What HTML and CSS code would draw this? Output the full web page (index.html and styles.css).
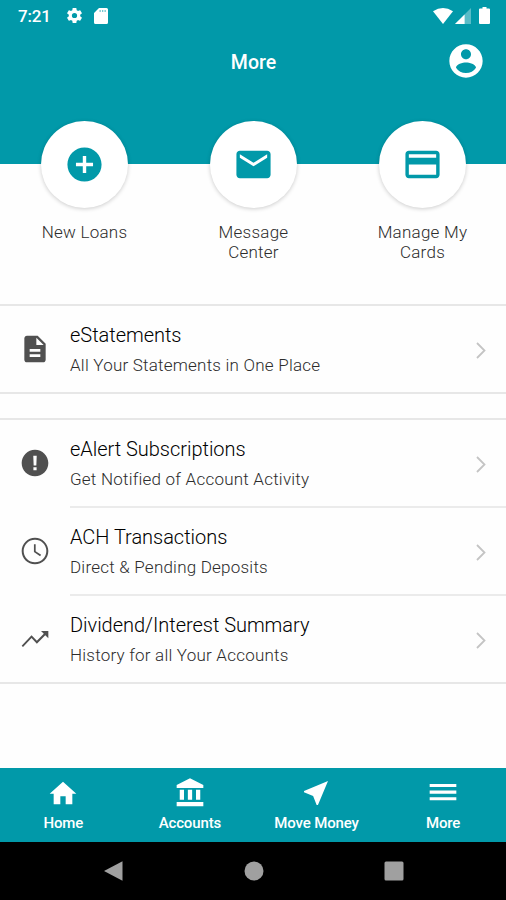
FILE: index.html
```html
<!DOCTYPE html>
<html lang="en">
<head>
<meta charset="utf-8">
<meta name="viewport" content="width=device-width, initial-scale=1">
<title>More</title>
<link rel="stylesheet" href="styles.css">
</head>
<body>
<div class="screen">
  <header class="header">
    <div class="status">
      <span class="time">7:21</span>
      <svg class="gear" viewBox="0 0 24 24"><path d="M19.14 12.94c.04-.3.06-.61.06-.94s-.02-.64-.07-.94l2.03-1.58a.49.49 0 0 0 .12-.61l-1.92-3.32a.49.49 0 0 0-.59-.22l-2.39.96c-.5-.38-1.03-.7-1.62-.94l-.36-2.54a.48.48 0 0 0-.48-.41h-3.84c-.24 0-.43.17-.47.41l-.36 2.54c-.59.24-1.13.57-1.62.94l-2.39-.96a.48.48 0 0 0-.59.22L2.74 8.87c-.12.21-.08.47.12.61l2.03 1.58c-.05.3-.09.63-.09.94s.02.64.07.94l-2.03 1.58a.49.49 0 0 0-.12.61l1.92 3.32c.12.22.37.29.59.22l2.39-.96c.5.38 1.03.7 1.62.94l.36 2.54c.05.24.24.41.48.41h3.84c.24 0 .44-.17.47-.41l.36-2.54c.59-.24 1.13-.56 1.62-.94l2.39.96c.22.08.47 0 .59-.22l1.92-3.32a.48.48 0 0 0-.12-.61l-2.01-1.58zM12 15.3a3.3 3.3 0 1 1 0-6.6 3.3 3.3 0 0 1 0 6.6z"/></svg>
      <svg class="sd" viewBox="0 0 14 16"><path d="M5 0h7.500a1.500 1.500 0 0 1 1.500 1.500v13a1.500 1.500 0 0 1-1.500 1.500h-11A1.500 1.500 0 0 1 0 14.500V5z"/><path class="slots" d="M5.500 2h1.300v2H5.500zM8 2h1.300v2H8zM10.500 2h1.300v2h-1.300z"/></svg>
      <span class="spacer"></span>
      <svg class="wifi" viewBox="0 0 20 16"><path d="M0 3.200Q10-3.200 20 3.200L10 16z"/></svg>
      <svg class="signal" viewBox="0 0 16 16"><path class="dim" d="M16 0v16H0z"/><path d="M9.600 6.400V16H0z"/></svg>
      <svg class="battery" viewBox="0 0 11 17"><path d="M3.500 0h4v1.600H10a1 1 0 0 1 1 1V16a1 1 0 0 1-1 1H1a1 1 0 0 1-1-1V2.600a1 1 0 0 1 1-1h2.500z"/></svg>
    </div>
    <div class="titlebar">
      <h1>More</h1>
      <svg class="profile" viewBox="0 0 24 24"><path d="M12 2C6.480 2 2 6.480 2 12s4.480 10 10 10 10-4.480 10-10S17.520 2 12 2zm0 3c1.660 0 3 1.340 3 3s-1.340 3-3 3-3-1.340-3-3 1.340-3 3-3zm0 14.200c-2.500 0-4.710-1.280-6-3.220.03-1.990 4-3.080 6-3.080 1.990 0 5.970 1.090 6 3.080-1.290 1.940-3.500 3.220-6 3.220z"/></svg>
    </div>
  </header>

  <section class="actions">
    <div class="action">
      <div class="circle"><svg viewBox="0 0 24 24"><path d="M12 2C6.480 2 2 6.480 2 12s4.480 10 10 10 10-4.480 10-10S17.520 2 12 2zm5 11h-4v4h-2v-4H7v-2h4V7h2v4h4v2z"/></svg></div>
      <p>New Loans</p>
    </div>
    <div class="action">
      <div class="circle"><svg viewBox="0 0 24 24"><path d="M20 4H4c-1.100 0-1.990.9-1.990 2L2 18c0 1.100.9 2 2 2h16c1.100 0 2-.9 2-2V6c0-1.100-.9-2-2-2zm0 4l-8 5-8-5V6l8 5 8-5v2z"/></svg></div>
      <p>Message<br>Center</p>
    </div>
    <div class="action">
      <div class="circle"><svg viewBox="0 0 24 24"><path d="M20 4H4c-1.110 0-1.990.89-1.990 2L2 18c0 1.110.89 2 2 2h16c1.110 0 2-.89 2-2V6c0-1.110-.89-2-2-2zm0 14H4v-6h16v6zm0-10H4V6h16v2z"/></svg></div>
      <p>Manage My<br>Cards</p>
    </div>
  </section>

  <main>
    <div class="group">
      <div class="row">
        <svg class="icon" viewBox="0 0 24 24"><path d="M14 2H6c-1.100 0-1.990.9-1.990 2L4 20c0 1.100.89 2 1.990 2H18c1.100 0 2-.9 2-2V8l-6-6zm2 16H8v-2h8v2zm0-4H8v-2h8v2zm-3-5V3.500L18.500 9H13z"/></svg>
        <div class="body"><div class="text"><h2>eStatements</h2><p>All Your Statements in One Place</p></div>
        <svg class="chevron" viewBox="0 0 10 17"><path d="M1 1l7.500 7.500L1 16"/></svg></div>
      </div>
    </div>
    <div class="group">
      <div class="row">
        <svg class="icon" viewBox="0 0 24 24"><path d="M12 2C6.480 2 2 6.480 2 12s4.480 10 10 10 10-4.480 10-10S17.520 2 12 2zm1.200 15.500h-2.400v-2.300h2.400zm-.2-3.700h-2L10.700 6.500h2.600z"/></svg>
        <div class="body"><div class="text"><h2>eAlert Subscriptions</h2><p>Get Notified of Account Activity</p></div>
        <svg class="chevron" viewBox="0 0 10 17"><path d="M1 1l7.500 7.500L1 16"/></svg></div>
      </div>
      <div class="row">
        <svg class="icon" viewBox="0 0 24 24"><path d="M11.990 2C6.470 2 2 6.480 2 12s4.470 10 9.990 10C17.520 22 22 17.520 22 12S17.520 2 11.990 2zM12 20.500a8.500 8.500 0 1 1 0-17 8.500 8.500 0 0 1 0 17zM12.500 7H11.200v5.800l4.600 3.200.8-1.200-4.100-2.700z"/></svg>
        <div class="body"><div class="text"><h2>ACH Transactions</h2><p>Direct &amp; Pending Deposits</p></div>
        <svg class="chevron" viewBox="0 0 10 17"><path d="M1 1l7.500 7.500L1 16"/></svg></div>
      </div>
      <div class="row">
        <svg class="icon" viewBox="0 0 24 24"><path d="M16.500 6l2.100 2.100-5.200 5.200-4-4.200L2 17l1 1 6.400-6.700 4 4.200 6.300-6.300L22 11.500V6z"/></svg>
        <div class="body"><div class="text"><h2>Dividend/Interest Summary</h2><p>History for all Your Accounts</p></div>
        <svg class="chevron" viewBox="0 0 10 17"><path d="M1 1l7.500 7.500L1 16"/></svg></div>
      </div>
    </div>
  </main>

  <nav class="tabs">
    <div class="tab"><svg viewBox="0 0 24 24"><path d="M10 20.500v-6h4v6h5v-8h3L12 3.500 2 12.500h3v8z"/></svg><span>Home</span></div>
    <div class="tab"><svg viewBox="0 0 24 24"><path d="M4.300 9.500v7.500h3.200V9.500zM10.400 9.500v7.500h3.200V9.500zM2 22h20v-3.300H2zM16.500 9.500v7.500h3.200V9.500zM12 1L2 6v2.200h20V6z"/></svg><span>Accounts</span></div>
    <div class="tab"><svg viewBox="0 0 24 24"><path d="M21 3L3 10.530v.98l6.840 2.650L12.480 21h.98L21 3z"/></svg><span>Move Money</span></div>
    <div class="tab"><svg viewBox="0 0 24 24"><path d="M2 5.200h20v2.300H2zM2 10.200h20v2.300H2zM2 15.200h20v2.300H2z"/></svg><span>More</span></div>
  </nav>

  <footer class="system">
    <svg viewBox="0 0 20 22"><path d="M18.500 1.300v19.400L0 11z"/></svg>
    <svg viewBox="0 0 20 22"><circle cx="10" cy="11" r="9.500"/></svg>
    <svg viewBox="0 0 20 22"><rect x=".5" y="1.500" width="19" height="19" rx="1.500"/></svg>
  </footer>
</div>
</body>
</html>
```
FILE: styles.css
```css
* { box-sizing: border-box; }
body { margin: 0; background: #fff; font-family: Roboto, "Liberation Sans", sans-serif; }
h1, h2, p { margin: 0; font-weight: 400; }
svg { display: block; flex: none; }
.screen { width: 506px; height: 900px; display: flex; flex-direction: column; overflow: hidden; background: #fefefe; }

.header { height: 164px; background: #0199a9; color: #fff; flex: none; }
.header svg { fill: #fff; }
.status { display: flex; align-items: center; height: 31px; padding: 0 16px 0 18px; }
.time { width: 47px; font-size: 17px; font-weight: 500; letter-spacing: -.2px; }
.gear { width: 19px; height: 19px; }
.sd { width: 14px; height: 16px; margin-left: 10px; }
.sd .slots { fill: #0199a9; opacity: .55; }
.spacer { flex: 1; }
.wifi { width: 20px; height: 16px; }
.signal { width: 16px; height: 16px; margin-left: 2px; }
.signal .dim { opacity: .35; }
.battery { width: 11px; height: 17px; margin-left: 8px; }
.titlebar { display: grid; grid-template-columns: 1fr auto 1fr; align-items: center; height: 60px; padding: 0 20px 0 21px; }
.titlebar h1 { grid-column: 2; padding-top: 2px; font-size: 19.500px; font-weight: 500; }
.profile { width: 40px; height: 40px; justify-self: end; }

.actions { display: grid; grid-template-columns: repeat(3, 169px); height: 183.500px; margin-top: -43.500px; flex: none; }
.action { display: flex; flex-direction: column; align-items: center; text-align: center; }
.circle { display: flex; align-items: center; justify-content: center; width: 87px; height: 87px; border-radius: 50%; background: #fff; box-shadow: 0 1px 4px rgba(0, 0, 0, .2); }
.circle svg { width: 41px; height: 41px; fill: #0199a9; }
.action p { margin-top: 14px; font-size: 17px; font-weight: 300; line-height: 20px; letter-spacing: .25px; color: #2c2c2c; }

main { flex: 1; }
.group { border-top: 2px solid #e7e7e7; border-bottom: 2px solid #e7e7e7; margin-bottom: 24px; }
.row { display: flex; height: 86px; }
.row + .row { height: 88px; }
.icon { width: 32px; height: 32px; margin: 27px 16px 0 19px; fill: #505050; }
.body { display: flex; flex: 1; margin-left: 3px; }
.row + .row .body { border-top: 2px solid #ebebeb; }
.row + .row .icon { margin-top: 29px; }
.text { flex: 1; padding-top: 17px; }
h2 { font-size: 20px; line-height: 24px; color: #000; font-weight: 300; letter-spacing: -.03px; white-space: nowrap; }
.text p { margin-top: 8px; font-size: 17px; line-height: 20px; font-weight: 300; color: #2c2c2c; letter-spacing: .22px; white-space: nowrap; }
.chevron { width: 10px; height: 17px; margin: 36px 20px 0 0; fill: none; stroke: #c4c4c4; stroke-width: 1.800; }

.tabs { display: grid; grid-template-columns: repeat(4, 126.600px); height: 74px; background: #0199a9; color: #fff; flex: none; }
.tab { display: flex; flex-direction: column; align-items: center; padding-top: 9px; font-size: 15px; font-weight: 500; line-height: 18px; letter-spacing: -.15px; }
.tab svg { width: 32px; height: 32px; fill: #fff; }
.tab span { margin-top: 5px; }

.system { display: flex; align-items: center; justify-content: center; gap: 120px; height: 58px; padding-left: 1px; background: #000; flex: none; }
.system svg { width: 20px; height: 22px; fill: #a0a0a0; }
```
